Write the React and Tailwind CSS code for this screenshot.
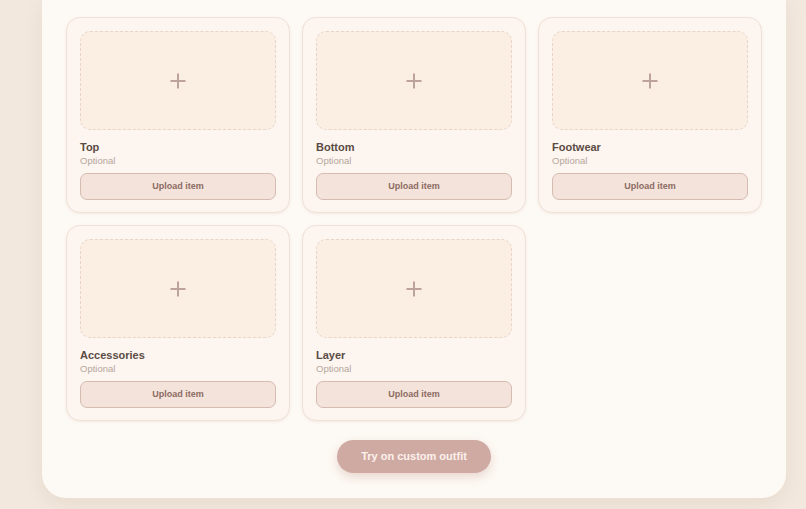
import React from "react";

const slots = ["Top", "Bottom", "Footwear", "Accessories", "Layer"];

const SlotCard = ({ name }) => {
  return (
    <div className="w-[224px] rounded-[14px] border border-[#f0e1d7] bg-[#fdf6f0] px-[13px] pt-[13px] pb-[12px] shadow-[0_1px_3px_rgba(180,140,120,0.12)]">
      <div className="flex h-[99px] items-center justify-center rounded-[10px] border border-dashed border-[#e9d5c8] bg-[#fbefe4]">
        <svg width="16" height="16" viewBox="0 0 16 16" fill="none">
          <path d="M8 0.5v15M0.5 8h15" stroke="#bea29c" strokeWidth="2" />
        </svg>
      </div>
      <p className="mt-[10px] text-[11px] leading-[14px] font-bold text-[#5b4b43]">{name}</p>
      <p className="text-[9.5px] leading-[13px] text-[#b5a59d]">Optional</p>
      <button className="mt-[6px] flex h-[27px] w-full items-center justify-center rounded-[7px] border border-[#d6bbb0] bg-[#f3e3da] text-[9px] font-bold text-[#8c6c62]">
        Upload item
      </button>
    </div>
  );
};

export default function App() {
  return (
    <div className="h-[509px] w-full overflow-hidden bg-[#f2e8de] pl-[42px] pr-[20px] font-['Liberation_Sans',Arial,sans-serif]">
      <div className="flex flex-col items-center rounded-b-[24px] bg-[#fdf9f4] px-[24px] pt-[17px] pb-[25px] shadow-[0_6px_18px_rgba(170,130,100,0.12)]">
        <div className="grid grid-cols-[224px_224px_224px] gap-[12px]">
          {slots.map((s) => (
            <SlotCard key={s} name={s} />
          ))}
        </div>
        <button className="mt-[19px] h-[33px] w-[154px] rounded-full bg-[#cfaaa3] text-[11px] font-bold text-[#fdf1ec] shadow-[0_4px_10px_rgba(190,140,125,0.3)]">
          Try on custom outfit
        </button>
      </div>
    </div>
  );
}
